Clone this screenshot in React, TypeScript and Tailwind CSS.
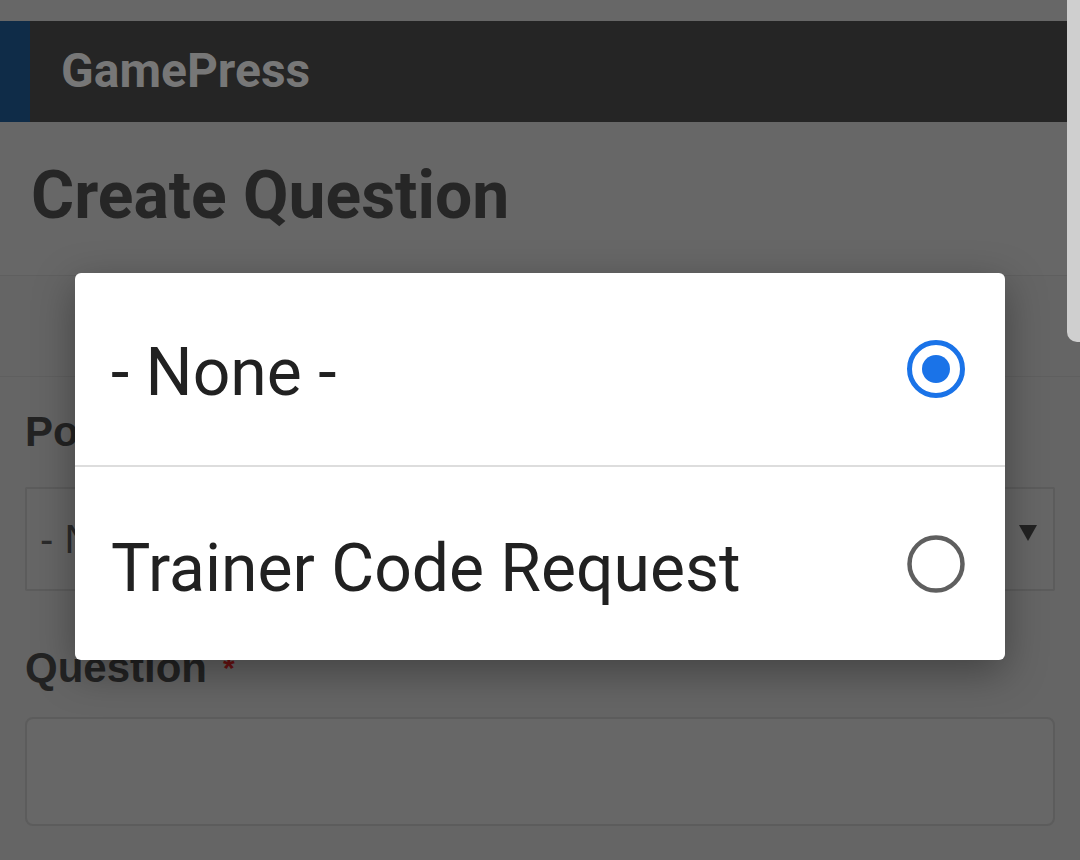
import React from "react";

export default function App() {
  return (
    <div
      className="relative w-[1080px] h-[860px] overflow-hidden bg-[#656565]"
      style={{ fontFamily: "Roboto, 'Liberation Sans', sans-serif" }}
    >
      {/* top strip */}
      <div className="h-[21px] bg-[#676767]" />
      {/* header */}
      <div className="flex h-[101px] bg-[#252525]">
        <div className="w-[30px] bg-[#0f2c48]" />
        <div className="flex items-center pl-[31px] pb-[2px] text-[48px] font-bold text-[#777777]">
          GamePress
        </div>
      </div>
      {/* title section */}
      <div className="h-[154px] border-b border-[#5f5f5f] bg-[#676767] pl-[31px] pt-[34px]">
        <div className="text-[66px] font-bold leading-[80px] text-[#262626]">Create Question</div>
      </div>
      {/* sub section */}
      <div className="h-[101px] border-b border-[#5f5f5f] bg-[#656565]" />
      {/* form */}
      <div className="px-[25px] pt-[30px]" style={{ fontFamily: "'Liberation Sans', Arial, sans-serif" }}>
        <div className="text-[42px] font-bold leading-[50px] text-[#232323]">Post Type</div>
        <div className="mt-[30px] flex h-[104px] items-center justify-between rounded-[2px] border-2 border-[#5c5c5c] bg-[#666666] pl-[13px] pr-[16px]">
          <span className="text-[40px] text-[#2a2a2a]">- None -</span>
          <svg width="18" height="18" viewBox="0 0 18 18" className="mb-[12px]">
            <polygon points="0,1 18,1 9,17" fill="#222222" />
          </svg>
        </div>
        <div className="mt-[52px] flex items-start text-[42px] font-bold leading-[50px] text-[#232323]">
          Question<span className="ml-[16px] text-[30px] text-[#6a1212]">*</span>
        </div>
        <div className="mt-[24px] h-[109px] rounded-[8px] border-2 border-[#5c5c5c] bg-[#676767]" />
      </div>
      {/* scrollbar */}
      <div className="absolute right-0 top-0 h-[342px] w-[13px] rounded-bl-[10px] bg-[#cfcfcf]" />
      {/* dialog */}
      <div className="absolute left-[75px] top-[273px] w-[930px] overflow-hidden rounded-[6px] bg-white shadow-[0_12px_40px_rgba(0,0,0,0.35)]">
        <div className="flex h-[194px] items-center justify-between border-b-2 border-[#dddddd] pl-[36px] pr-[39px]">
          <span className="pt-[8px] text-[66px] leading-none text-[#212121]">- None -</span>
          <svg width="60" height="60" viewBox="0 0 60 60">
            <circle cx="30" cy="30" r="26.5" fill="none" stroke="#1a73e8" strokeWidth="5" />
            <circle cx="30" cy="30" r="14" fill="#1a73e8" />
          </svg>
        </div>
        <div className="flex h-[193px] items-center justify-between pl-[36px] pr-[39px]">
          <span className="pt-[10px] text-[66px] leading-none text-[#212121]">Trainer Code Request</span>
          <svg width="60" height="60" viewBox="0 0 60 60">
            <circle cx="30" cy="30" r="26.5" fill="none" stroke="#5f5f5f" strokeWidth="4.5" />
          </svg>
        </div>
      </div>
    </div>
  );
}
